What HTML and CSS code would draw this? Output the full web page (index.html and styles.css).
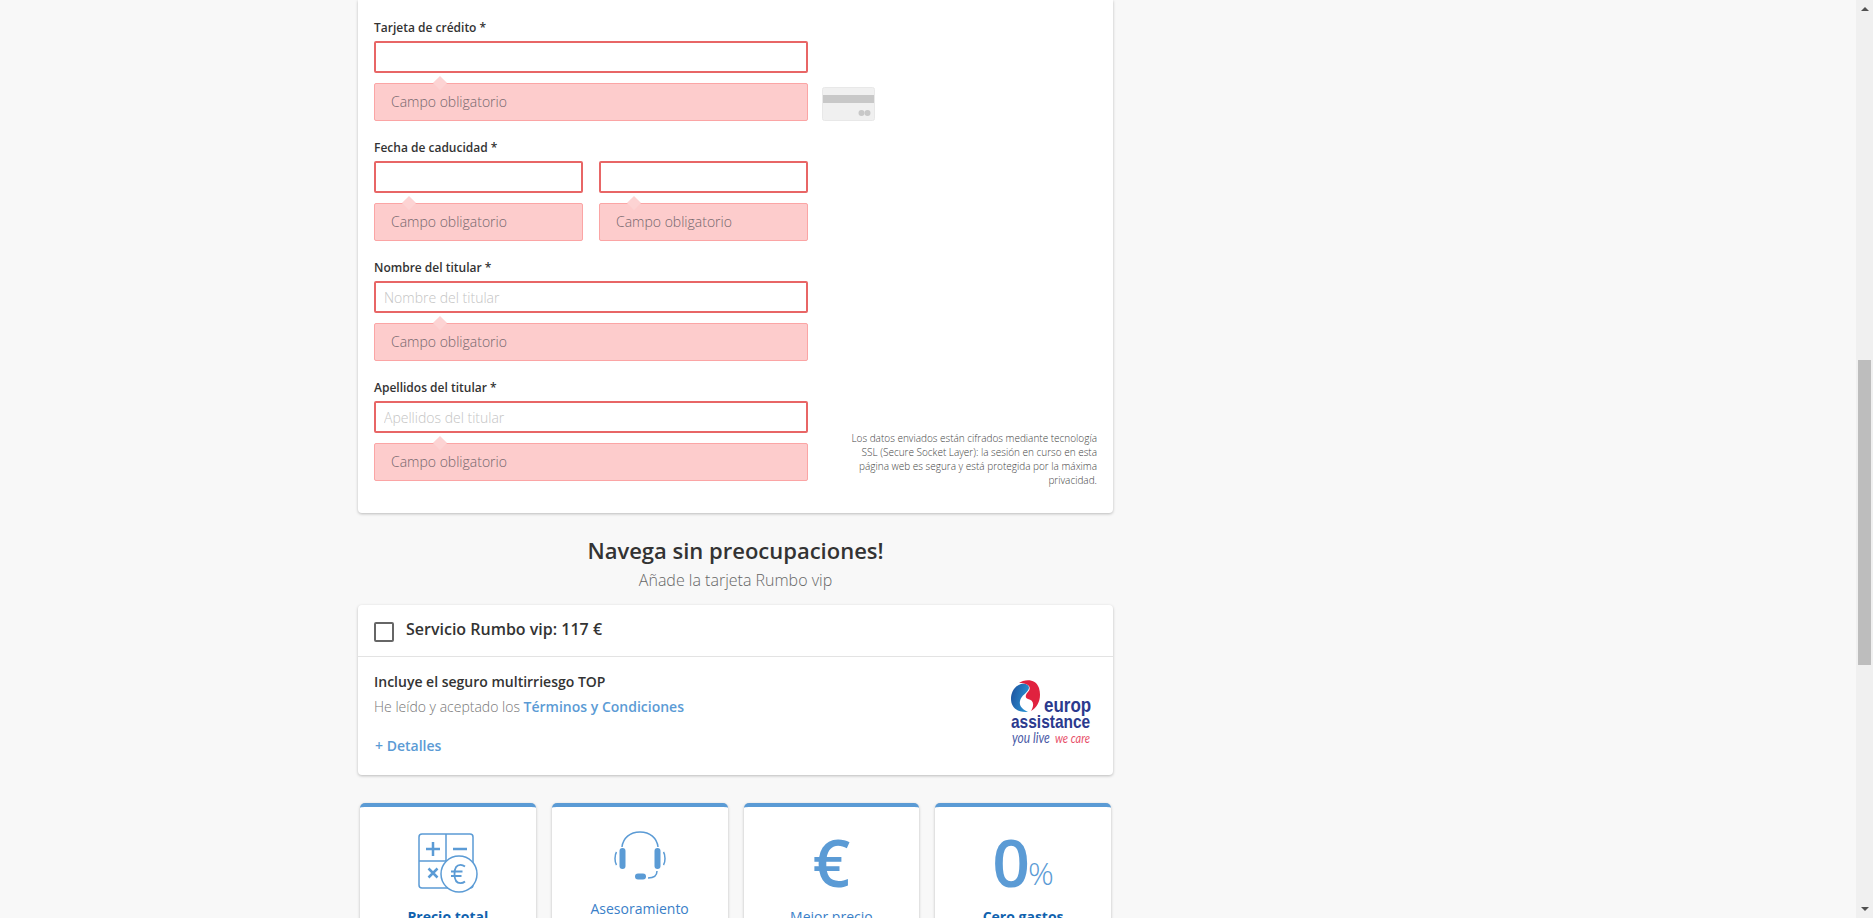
FILE: index.html
```html
<!DOCTYPE html>
<html lang="es">
<head>
    <meta charset="UTF-8">
    <meta name="viewport" content="width=device-width, initial-scale=1.0">
    <title>Rumbo - Pago</title>
    <link rel="stylesheet" href="styles.css">
</head>
<body>
    <div class="page">
        <main class="content">
            <section class="card payment">
                <div class="fields">
                    <div class="field">
                        <label class="field-label">Tarjeta de crédito *</label>
                        <input class="field-input" type="text">
                        <div class="alert">Campo obligatorio</div>
                    </div>
                    <div class="field">
                        <label class="field-label">Fecha de caducidad *</label>
                        <div class="field-pair">
                            <div class="field-half">
                                <input class="field-input" type="text">
                                <div class="alert">Campo obligatorio</div>
                            </div>
                            <div class="field-half">
                                <input class="field-input" type="text">
                                <div class="alert">Campo obligatorio</div>
                            </div>
                        </div>
                    </div>
                    <div class="field">
                        <label class="field-label">Nombre del titular *</label>
                        <input class="field-input" type="text" placeholder="Nombre del titular">
                        <div class="alert">Campo obligatorio</div>
                    </div>
                    <div class="field">
                        <label class="field-label">Apellidos del titular *</label>
                        <input class="field-input" type="text" placeholder="Apellidos del titular">
                        <div class="alert">Campo obligatorio</div>
                    </div>
                </div>
                <div class="side">
                    <svg class="cc-icon" width="53" height="34" viewBox="0 0 53 34">
                        <rect x="0.5" y="0.5" width="52" height="33" rx="2" fill="#f0f0f0" stroke="#e8e8e8"/>
                        <rect x="1" y="8" width="51" height="8" fill="#c8c8c8"/>
                        <circle cx="39.500" cy="26" r="3" fill="#c8c8c8"/>
                        <circle cx="45.500" cy="26" r="3" fill="#c8c8c8"/>
                    </svg>
                    <p class="disclaimer">Los datos enviados están cifrados mediante tecnología SSL (Secure Socket Layer): la sesión en curso en esta página web es segura y está protegida por la máxima privacidad.</p>
                </div>
            </section>

            <h2 class="promo-title">Navega sin preocupaciones!</h2>
            <p class="promo-sub">Añade la tarjeta Rumbo vip</p>

            <section class="card vip">
                <div class="vip-head">
                    <span class="checkbox"></span>
                    <span class="vip-name">Servicio Rumbo vip: 117 €</span>
                </div>
                <div class="vip-body">
                    <div class="vip-info">
                        <div class="vip-title">Incluye el seguro multirriesgo TOP</div>
                        <div class="vip-terms">He leído y aceptado los <a href="#">Términos y Condiciones</a></div>
                        <a class="vip-more" href="#">+ Detalles</a>
                    </div>
                    <svg class="logo" width="80" height="68" viewBox="0 0 80 68">
                        <defs>
                            <linearGradient id="logo-blue" x1="0" y1="0" x2="1" y2="0.4">
                                <stop offset="0" stop-color="#1d4f9c"/>
                                <stop offset="1" stop-color="#2a8fd0"/>
                            </linearGradient>
                        </defs>
                        <path d="M10 4C3 6 0 13 0 19c0 8 6 14 17 13-6-3-9-6-8-11 1-6 8-8 9-13 0-3-3-5-8-4z" fill="url(#logo-blue)"/>
                        <path d="M8 3c5-4 17-5 20 5 3 10-1 19-8 23 4-7 2-11-3-12-3-1-3-4 0-7 3-3 3-9-9-9z" fill="#e0223f"/>
                        <text class="logo-word" transform="translate(33 32) scale(1 1.200)">europ</text>
                        <text class="logo-word logo-word-long" transform="translate(0 48) scale(1 1.200)">assistance</text>
                        <text class="logo-tag" transform="translate(1 63) scale(1 1.200)">you live</text>
                        <text class="logo-tag logo-tag-red" transform="translate(44 63) scale(1 1.200)">we care</text>
                    </svg>
                </div>
            </section>

            <section class="tiles">
                <div class="tile">
                    <div class="tile-icon">
                        <svg width="60" height="60" viewBox="0 0 60 60" fill="none" stroke="#5b9bd5" stroke-width="1.500">
                            <rect x="1" y="1" width="54" height="54" rx="3"/>
                            <path d="M28 1v27M1 28h27"/>
                            <path d="M8 16h14M15 9v14M35 16h14M10.500 35.500l9 9M19.500 35.500l-9 9" stroke-width="2.500"/>
                            <circle cx="41" cy="41" r="18" fill="#fff"/>
                            <path d="M47 33.500c-1.500-1.200-3-1.700-4.500-1.700-3.800 0-6 3.600-6 9.200s2.200 9.200 6 9.200c1.600 0 3.100-.5 4.500-1.700M33 38.500h11.500M33 43h10.500" stroke-width="1.800"/>
                        </svg>
                    </div>
                    <div class="tile-text tile-text-bold">Precio total</div>
                </div>
                <div class="tile">
                    <div class="tile-icon tile-icon-high">
                        <svg width="52" height="50" viewBox="0 0 52 50" fill="none" stroke="#5b9bd5">
                            <path d="M8 16C9 7 16 1 26 1s17 6 18 15" stroke-width="1.500"/>
                            <rect x="5.500" y="17" width="6" height="21" rx="3" fill="#5b9bd5" stroke="none"/>
                            <rect x="40.500" y="17" width="6" height="21" rx="3" fill="#5b9bd5" stroke="none"/>
                            <path d="M2.500 21c-2 3-2 10 0 13M49.500 21c2 3 2 10 0 13" stroke-width="1.500"/>
                            <path d="M43 40c0 4-3 7-9 7" stroke-width="1.500"/>
                            <rect x="21" y="42.500" width="11" height="6" rx="3" fill="#5b9bd5" stroke="none"/>
                        </svg>
                    </div>
                    <div class="tile-text tile-text-up">Asesoramiento</div>
                </div>
                <div class="tile">
                    <div class="tile-icon tile-glyph">€</div>
                    <div class="tile-text">Mejor precio</div>
                </div>
                <div class="tile">
                    <div class="tile-icon tile-glyph">0<span class="tile-percent">%</span></div>
                    <div class="tile-text tile-text-bold">Cero gastos</div>
                </div>
            </section>
        </main>
        <div class="scrollbar">
            <span class="scroll-up"></span>
            <span class="scroll-thumb"></span>
            <span class="scroll-down"></span>
        </div>
    </div>
</body>
</html>
```

FILE: styles.css
```css
html, body {
    margin: 0;
    padding: 0;
    height: 918px;
    overflow: hidden;
}

body {
    font-family: "Open Sans", Arial, sans-serif;
    background-color: #f8f8f8;
    color: #333;
}

.page {
    display: flex;
    height: 918px;
}

.content {
    flex: 1;
    padding-left: 358px;
    overflow: hidden;
}

.content > * {
    width: 755px;
}

.card {
    background-color: #fff;
    border-radius: 4px;
    box-shadow: 0 1px 3px rgba(0, 0, 0, 0.25);
}

/* payment form */
.payment {
    display: flex;
    box-sizing: border-box;
    height: 513px;
    padding: 0 16px 26px;
    border-radius: 0 0 4px 4px;
}

.fields {
    width: 434px;
    flex-shrink: 0;
}

.field {
    padding-top: 18px;
}

.field:first-child {
    padding-top: 19px;
}

.field-label {
    display: block;
    height: 18px;
    margin-bottom: 4px;
    font-size: 12px;
    font-weight: 600;
    line-height: 18px;
}

.field-input {
    display: block;
    box-sizing: border-box;
    width: 100%;
    height: 32px;
    padding: 0 8px;
    border: 2px solid #e86666;
    border-radius: 2px;
    background-color: #fff;
    font-family: inherit;
    font-size: 14px;
    font-weight: 300;
    outline: none;
}

.field-input::placeholder {
    color: #c4c4c4;
}

.field-pair {
    display: flex;
    gap: 16px;
}

.field-half {
    flex: 1;
}

.alert {
    position: relative;
    box-sizing: border-box;
    height: 38px;
    margin-top: 10px;
    padding-left: 16px;
    border: 1px solid #fba5a5;
    border-radius: 2px;
    background-color: #fdcccc;
    color: #75676d;
    font-size: 14px;
    font-weight: 300;
    line-height: 36px;
}

.alert::before {
    content: "";
    position: absolute;
    top: -6px;
    left: 14%;
    width: 10px;
    height: 10px;
    background-color: #fdd3d3;
    transform: rotate(45deg);
}

.side {
    display: flex;
    flex: 1;
    flex-direction: column;
    align-items: flex-start;
    padding-left: 14px;
}

.cc-icon {
    margin-top: 87px;
}

.disclaimer {
    align-self: flex-end;
    width: 250px;
    margin: auto 0 0;
    color: #444;
    font-size: 10px;
    font-weight: 300;
    line-height: 14px;
    text-align: right;
}

/* vip promo */
.promo-title {
    margin: 21px 0 0;
    font-size: 22px;
    font-weight: 600;
    line-height: 32px;
    text-align: center;
}

.promo-sub {
    margin: 3px 0 14px;
    color: #666;
    font-size: 16px;
    font-weight: 300;
    line-height: 22px;
    text-align: center;
}

.vip-head {
    display: flex;
    align-items: center;
    gap: 12px;
    box-sizing: border-box;
    height: 52px;
    padding: 0 16px;
    border-bottom: 1px solid #e3e3e3;
}

.checkbox {
    box-sizing: border-box;
    width: 20px;
    height: 20px;
    margin-top: 2px;
    border: 2px solid #666;
    border-radius: 2px;
}

.vip-name {
    margin-top: -3px;
    font-size: 16px;
    font-weight: 600;
}

.vip-body {
    display: flex;
    justify-content: space-between;
    height: 118px;
    padding: 0 22px 0 16px;
}

.vip-title {
    margin-top: 16px;
    font-size: 14px;
    font-weight: 600;
    line-height: 18px;
}

.vip-terms {
    margin-top: 7px;
    color: #777;
    font-size: 14px;
    font-weight: 300;
    line-height: 18px;
}

a {
    color: #5b9bd5;
    font-weight: 600;
    text-decoration: none;
}

.vip-more {
    display: block;
    margin-top: 21px;
    padding-left: 1px;
    font-size: 14px;
    line-height: 18px;
}

.logo {
    margin-top: 23px;
}

.logo-word {
    fill: #2b3a8e;
    font-family: "Liberation Sans", Arial, sans-serif;
    font-size: 17px;
    font-weight: 700;
}

.logo-word-long {
    font-size: 15.500px;
}

.logo-tag {
    fill: #4a5aa6;
    font-family: Lato, sans-serif;
    font-size: 12px;
    font-style: italic;
}

.logo-tag-red {
    fill: #e8506a;
    font-size: 11px;
}

/* feature tiles */
.tiles {
    display: flex;
    gap: 16px;
    box-sizing: border-box;
    margin-top: 28px;
    padding: 0 2px;
}

.tile {
    flex: 1;
    box-sizing: border-box;
    height: 160px;
    border-top: 4px solid #5b9bd5;
    border-radius: 5px;
    background-color: #fff;
    box-shadow: 0 1px 3px rgba(0, 0, 0, 0.25);
    text-align: center;
}

.tile-icon {
    display: flex;
    align-items: flex-start;
    justify-content: center;
    box-sizing: border-box;
    height: 90px;
    padding-top: 26px;
}

.tile-icon-high {
    padding-top: 24px;
}

.tile-glyph {
    padding-top: 9px;
    color: #5b9bd5;
    font-size: 66px;
    font-weight: 600;
    line-height: 90px;
}

.tile-percent {
    align-self: flex-start;
    margin-top: 37px;
    margin-left: -2px;
    font-size: 32px;
    font-weight: 300;
    line-height: 40px;
}

.tile-text {
    margin-top: 10px;
    color: #3a80c8;
    font-size: 14px;
    line-height: 20px;
}

.tile-text-up {
    margin-top: 2px;
}

.tile-text-bold {
    color: #0f62ae;
    font-weight: 700;
}

/* browser scrollbar */
.scrollbar {
    display: flex;
    flex-direction: column;
    align-items: center;
    box-sizing: border-box;
    width: 17px;
    height: 918px;
    background-color: #f0f0f0;
}

.scroll-up,
.scroll-down {
    width: 0;
    height: 0;
    border-right: 4px solid transparent;
    border-left: 4px solid transparent;
}

.scroll-up {
    margin-top: 7px;
    border-bottom: 4px solid #505050;
}

.scroll-thumb {
    width: 13px;
    height: 305px;
    margin-top: 349px;
    background-color: #bdbdbd;
}

.scroll-down {
    margin-top: auto;
    margin-bottom: 7px;
    border-top: 4px solid #505050;
}
```
